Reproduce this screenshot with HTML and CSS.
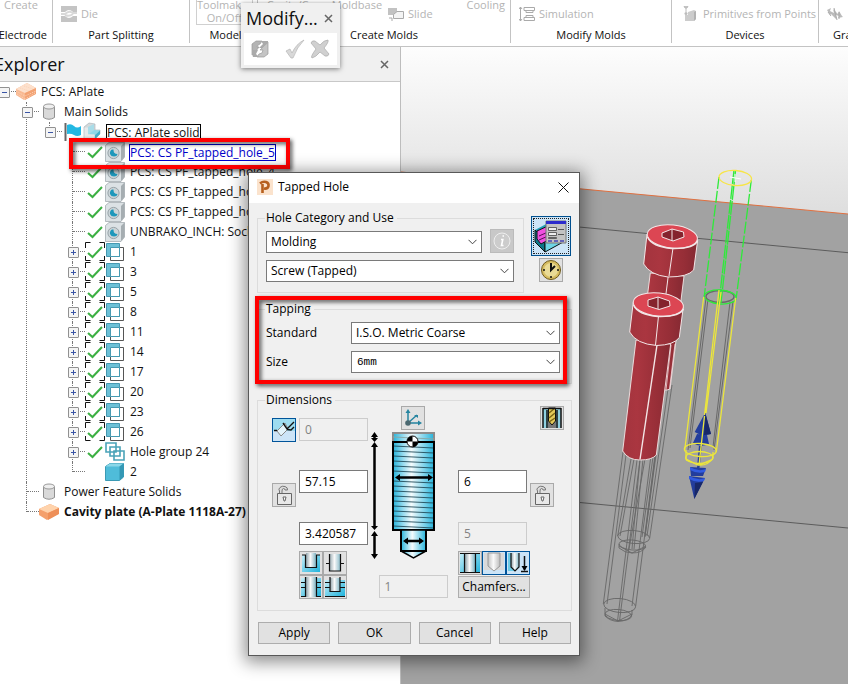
FILE: index.html
```html
<!DOCTYPE html>
<html lang="en">
<head>
<meta charset="utf-8">
<title>Tapped Hole</title>
<link rel="stylesheet" href="styles.css">
</head>
<body>
<svg class="defs" aria-hidden="true">
  <defs>
    <linearGradient id="steel"><stop offset="0" stop-color="#25b4dc"/><stop offset=".45" stop-color="#f4fbfd"/><stop offset="1" stop-color="#25b4dc"/></linearGradient>
    <linearGradient id="aqua" x1="0" y1="0" x2="1" y2="1"><stop offset="0" stop-color="#c8eef8"/><stop offset="1" stop-color="#1fb3dc"/></linearGradient>
    <linearGradient id="mute"><stop offset="0" stop-color="#c4c4c4"/><stop offset=".45" stop-color="#fafafa"/><stop offset="1" stop-color="#bcbcbc"/></linearGradient>
    <linearGradient id="tube"><stop offset="0" stop-color="#8fa3ab"/><stop offset=".45" stop-color="#fafafa"/><stop offset="1" stop-color="#7fb4c4"/></linearGradient>
    <linearGradient id="sky" x1="0" y1="0" x2="0" y2="1"><stop offset="0" stop-color="#fdfdfd"/><stop offset="1" stop-color="#dedede"/></linearGradient>
    <linearGradient id="red"><stop offset="0" stop-color="#a3343e"/><stop offset=".3" stop-color="#aa3640"/><stop offset=".75" stop-color="#962e37"/><stop offset="1" stop-color="#842932"/></linearGradient>
    <symbol id="i-slab" viewBox="0 0 20 20"><path d="M0 7 11 2 20 6 19 12 8 18 0 13Z" fill="#f4a06c"/><path d="M0 7 11 2 20 6 9 11Z" fill="#ffd3ac"/><path d="M9 11 20 6V12L9 18Z" fill="#ee8f58"/></symbol>
    <symbol id="i-slab-dither" viewBox="0 0 20 20"><path d="M0 7 11 1 20 6 19 12 8 18 0 13Z" fill="#f9b992"/><path d="M0 7 11 1 20 6 9 11Z" fill="#fde0cc"/><path d="M9 11 20 6V12L9 18Z" fill="#f3a273"/><path d="M0 9 9 14 20 9M1 12 9 17 19 11M4 6 13 9M8 4 17 7" stroke="#fbd3b8" stroke-dasharray="1 1" fill="none"/></symbol>
    <symbol id="i-cyl" viewBox="0 0 20 20"><path d="M4.500 4.500V15.500Q10 19 15.500 15.500V4.500" fill="#d9d9d9" stroke="#909090"/><ellipse cx="10" cy="4.500" rx="5.500" ry="2.500" fill="#eee" stroke="#999"/></symbol>
    <symbol id="i-flag" viewBox="0 0 20 20"><path d="M3.500 1V19" stroke="#666" stroke-width="2"/><path d="M5 3Q9 1 12 4T19 4V13Q15 15 12 13T5 12Z" fill="#23b8e2"/></symbol>
    <symbol id="i-solid" viewBox="0 0 20 20"><path d="M2 5 7 1 13 2V8L18 8V12L12 18 2 17Z" fill="#d3d9db" stroke="#a3adb1" stroke-width=".6"/><path d="M6 5 12 2V8L8 12H6Z" fill="#a9dce8"/><path d="M7 12 12 8 18 8.500 13 13Z" fill="#8fd8e8"/><path d="M13 13 18 8.500V12L12.500 17.500Z" fill="#45b0cb"/><path d="M2.500 5.500H6V12.500H12.500V17.500H2.500Z" fill="#e6eaeb"/></symbol>
    <symbol id="i-check" viewBox="0 0 20 20"><path d="M3 11 7.500 15 17 5" fill="none" stroke="#3cb043" stroke-width="2"/></symbol>
    <symbol id="i-check-box" viewBox="0 0 20 20"><path d="M3 11 7.500 15 17 5" fill="none" stroke="#3cb043" stroke-width="2"/><path d="M5.500 .5H.5V6M14.500 .5H19.500V6M.5 14V18.500H5.500M14.500 18.500H19.500V14" fill="none" stroke="#111"/></symbol>
    <symbol id="i-feature" viewBox="0 0 20 20"><path d="M.5 3.500 4 .5H19.500V15L16 19.500H.5Z" fill="#dce2e5" stroke="#9ba4a9" stroke-width=".7"/><path d="M16 4 19.500.5V15L16 19Z" fill="#a5adb1"/><circle cx="8.500" cy="11" r="5.600" fill="#ccd4d7" stroke="#98a3a8"/><path d="M7 7.500Q4.500 9 5 12 6 14.500 9 14.500 12 14.500 12.500 12 10.500 12 9 10.500 8.500 9 8.500 7.500Z" fill="#1e98bb"/></symbol>
    <symbol id="i-copy" viewBox="0 0 20 20"><path d="M5.500 5.500H18.500V18.500H5.500Z" fill="#fff" stroke="#555"/><path d="M1.500 1.500H14.500V14.500H1.500Z" fill="#6cc0d6" stroke="#4699b2"/><path d="M5.500 5.500H14.500V14.500H5.500Z" fill="#fff" stroke="#4699b2"/></symbol>
    <symbol id="i-group" viewBox="0 0 20 20"><g fill="none" stroke="#4aa3b8" stroke-width="1.600"><path d="M1 1H11V10H1Z"/><path d="M5 5H15V14H5Z"/><path d="M9 9H19V18H9Z"/></g></symbol>
    <symbol id="i-cube" viewBox="0 0 20 20"><path d="M.5 4.500 5 1.500H18.500V15L14.500 18.500H.5Z" fill="#4fbcd9" stroke="#3b9ab4"/><path d="M.5 4.500 5 1.500H18.500L14.500 4.500Z" fill="#8ad7e9"/><path d="M14.500 4.500 18.500 1.500V15L14.500 18.500Z" fill="#3398b5"/></symbol>
    <symbol id="i-lock" viewBox="0 0 22 22"><path d="M4.500 9.500H18.500V20.500H4.500Z" fill="#e8e8e8" stroke="#666"/><path d="M6.500 9V7Q5 5 7 3.500 9 1.500 12 2.500T14.500 6H12Q12 4.500 10.500 4.500T9 7V9" fill="#ddd" stroke="#777"/><path d="M10 13H13L12 17H11Z" fill="#fff" stroke="#666"/></symbol>
  </defs>
</svg>

<div class="app">
  <header class="ribbon">
    <section class="group"><div class="cmds"><span class="cmd up">Create</span></div><h2>Electrode</h2></section>
    <section class="group"><div class="cmds"><span class="cmd"><svg width="16" height="16" viewBox="0 0 16 16"><path d="M0 0H16V6H12Q8 2 4 6H0ZM0 10H4Q8 14 12 10H16V16H0Z" fill="#c4c4c4"/><path d="M0 8H4Q8 4 12 7H16M4 9Q8 11 12 8" stroke="#d8d8d8" stroke-width="2" fill="none"/></svg>Die</span></div><h2>Part Splitting</h2></section>
    <section class="group"><div class="cmds"><button class="toggle" disabled>Toolmaker<br>On/Off</button></div><h2>Model</h2></section>
    <section class="group"><div class="cmds molds"><span class="cmd up">Cavity/Core</span><span class="cmd up">Moldbase</span><span class="cmd"><svg width="16" height="16" viewBox="0 0 16 16"><path d="M0 2H9V9H0Z" fill="#c2c2c2"/><path d="M5.500 8.500 9 5.500H15.500V12.500H5.500Z" fill="#f4f4f4" stroke="#aaa"/><path d="M1 12H4V15" fill="none" stroke="#aaa"/></svg>Slide</span><span class="cmd up">Cooling</span></div><h2>Create Molds</h2></section>
    <section class="group"><div class="cmds"><span class="cmd"><svg width="16" height="16" viewBox="0 0 16 16"><path d="M1.500 1V15M0 3 1.500 1 3 3M0 13 1.500 15 3 13M5 1.500H15.500V4.500H5ZM5 14.500H15.500V11.500H5ZM7 4.500V6.500H14V4.500M7 11.500V9.500H14V11.500" stroke="#aaa" fill="none"/></svg>Simulation</span></div><h2>Modify Molds</h2></section>
    <section class="group"><div class="cmds"><span class="cmd wide"><svg width="16" height="16" viewBox="0 0 16 16"><path d="M1 0H5L4 2H2ZM3 1V6" fill="#ccc" stroke="#bbb"/><circle cx="3" cy="7.500" r="1.500" fill="#bbb"/><path d="M2 9V15H11L13 13V5L11 4 5 6V9Z" fill="#ccc"/><path d="M11 6 13 5V13L11 15Z" fill="#b2b2b2"/></svg>Primitives from Points</span></div><h2>Devices</h2></section>
    <section class="group last"><div class="cmds"><span class="cmd"><svg width="16" height="16" viewBox="0 0 16 16"><path d="M0 4 4 2 3 5 7 7 6 3 11 8 12 5 15 10 16 11 11 12 12 10 9 9 9 13 4 8 3 9Z" fill="#bbb"/><path d="M1 6 4 10M7 2 10 14M12 6V13" stroke="#aaa"/></svg></span></div><h2>Graphics</h2></section>
  </header>

  <main class="work">
    <aside class="explorer">
      <div class="panel-head"><h1>Explorer</h1><button class="close" aria-label="Close Explorer"><svg width="9" height="9" viewBox="0 0 9 9"><path d="M1 1 8 8M8 1 1 8"/></svg></button></div>
      <ul class="tree">
        <li><div class="node"><i class="exp minus"></i><svg class="ic"><use href="#i-slab-dither"/></svg><span>PCS: APlate</span></div>
          <ul>
            <li><div class="node"><i class="exp minus"></i><svg class="ic"><use href="#i-cyl"/></svg><span>Main Solids</span></div>
              <ul>
                <li><div class="node"><i class="exp minus"></i><svg class="ic"><use href="#i-flag"/></svg><svg class="ic"><use href="#i-solid"/></svg><span class="boxed">PCS: APlate solid</span></div>
                  <ul>
                    <li><div class="node"><i class="exp"></i><svg class="ic"><use href="#i-check"/></svg><svg class="ic"><use href="#i-feature"/></svg><span class="boxed picked">PCS: CS PF_tapped_hole_5</span><b class="mark mark-row"></b></div></li>
                    <li><div class="node"><i class="exp"></i><svg class="ic"><use href="#i-check"/></svg><svg class="ic"><use href="#i-feature"/></svg><span>PCS: CS PF_tapped_hole_4</span></div></li>
                    <li><div class="node"><i class="exp"></i><svg class="ic"><use href="#i-check"/></svg><svg class="ic"><use href="#i-feature"/></svg><span>PCS: CS PF_tapped_hole_3</span></div></li>
                    <li><div class="node"><i class="exp"></i><svg class="ic"><use href="#i-check"/></svg><svg class="ic"><use href="#i-feature"/></svg><span>PCS: CS PF_tapped_hole_2</span></div></li>
                    <li><div class="node"><i class="exp"></i><svg class="ic"><use href="#i-check"/></svg><svg class="ic"><use href="#i-feature"/></svg><span>UNBRAKO_INCH: Socket</span></div></li>
                    <li><div class="node"><i class="exp plus"></i><svg class="ic"><use href="#i-check-box"/></svg><svg class="ic"><use href="#i-copy"/></svg><span>1</span></div></li>
                    <li><div class="node"><i class="exp plus"></i><svg class="ic"><use href="#i-check-box"/></svg><svg class="ic"><use href="#i-copy"/></svg><span>3</span></div></li>
                    <li><div class="node"><i class="exp plus"></i><svg class="ic"><use href="#i-check-box"/></svg><svg class="ic"><use href="#i-copy"/></svg><span>5</span></div></li>
                    <li><div class="node"><i class="exp plus"></i><svg class="ic"><use href="#i-check-box"/></svg><svg class="ic"><use href="#i-copy"/></svg><span>8</span></div></li>
                    <li><div class="node"><i class="exp plus"></i><svg class="ic"><use href="#i-check-box"/></svg><svg class="ic"><use href="#i-copy"/></svg><span>11</span></div></li>
                    <li><div class="node"><i class="exp plus"></i><svg class="ic"><use href="#i-check-box"/></svg><svg class="ic"><use href="#i-copy"/></svg><span>14</span></div></li>
                    <li><div class="node"><i class="exp plus"></i><svg class="ic"><use href="#i-check-box"/></svg><svg class="ic"><use href="#i-copy"/></svg><span>17</span></div></li>
                    <li><div class="node"><i class="exp plus"></i><svg class="ic"><use href="#i-check-box"/></svg><svg class="ic"><use href="#i-copy"/></svg><span>20</span></div></li>
                    <li><div class="node"><i class="exp plus"></i><svg class="ic"><use href="#i-check-box"/></svg><svg class="ic"><use href="#i-copy"/></svg><span>23</span></div></li>
                    <li><div class="node"><i class="exp plus"></i><svg class="ic"><use href="#i-check-box"/></svg><svg class="ic"><use href="#i-copy"/></svg><span>26</span></div></li>
                    <li><div class="node"><i class="exp plus"></i><svg class="ic"><use href="#i-check"/></svg><svg class="ic"><use href="#i-group"/></svg><span>Hole group 24</span></div></li>
                    <li><div class="node"><i class="exp"></i><svg class="ic"></svg><svg class="ic"><use href="#i-cube"/></svg><span>2</span></div></li>
                  </ul>
                </li>
              </ul>
            </li>
            <li><div class="node"><i class="exp"></i><svg class="ic"><use href="#i-cyl"/></svg><span>Power Feature Solids</span></div></li>
            <li><div class="node"><i class="exp"></i><svg class="ic"><use href="#i-slab"/></svg><strong>Cavity plate (A-Plate 1118A-27)</strong></div></li>
          </ul>
        </li>
      </ul>
    </aside>

    <section class="view" aria-label="3D view">
      <svg viewBox="401 47 447 637" preserveAspectRatio="xMinYMin slice">
        <path d="M401 47H848V214H401Z" fill="url(#sky)"/>
        <path d="M401 172 848 214V684H401Z" fill="#a2a2a2"/>
        <path d="M401 172 848 214" stroke="#e07040"/>
        <path d="M401 210 848 252.700M401 485.500 848 528" stroke="#5c5c5c" fill="none"/>
        <g fill="none" stroke="#686868" stroke-width=".9">
          <path d="M672 385 649.700 538M668 389 647 536M664 389 645 536M631 459 617.700 536M634 459 620 536M640 459 632 549M643 459 634 549M645 459 629 549M653 457 642 537M656 455 645 537"/>
          <path d="M623 452 603.300 604M626 455 607 604M655 455 635.700 606M651 455 632 606M637 460 617.500 621M640 460 619.500 621"/>
          <ellipse cx="633.700" cy="537" rx="16" ry="6.500" transform="rotate(5 633.700 537)"/><ellipse cx="632.300" cy="545" rx="13.300" ry="5" transform="rotate(5 632.300 545)"/><path d="M619 544V548Q625 553 632 553 642 553 646 547M619 546 632 553 646 546"/>
          <ellipse cx="619.700" cy="605.500" rx="16" ry="7" transform="rotate(5 619.700 605.500)"/><ellipse cx="618.300" cy="615" rx="13.300" ry="5.500" transform="rotate(5 618.300 615)"/><path d="M605 608V616Q610 621 618 621.500 628 621 632 615V610M605 614 618 621 632 614"/>
        </g>
        <g stroke="#f3e6e7" stroke-linejoin="round">
          <path d="M650.300 273 636 386Q650 392 667 390L670 389 684 276Z" fill="url(#red)" stroke-width=".9"/>
          <path d="M669 270 654 388" fill="none"/>
          <path d="M647 234 643.700 264Q650 275 668 277 688 277 693.700 270L697.700 240Z" fill="url(#red)"/>
          <ellipse cx="672.300" cy="236.500" rx="25.200" ry="11.500" fill="#dc4653" transform="rotate(6 672.300 236.500)"/>
          <path d="M647.500 237Q652 247 672 248.500 694 249 697.500 241" fill="none" stroke-width="1.500"/>
          <path d="M662 233 672 229 683.500 232 684 237 673 241 662 237Z" fill="#85232d"/><path d="M672 229V241M673 248 669 276" fill="none"/>
          <path d="M636 340 622.700 451Q628 460 640 460 652 460 656.300 455L670.700 344Z" fill="url(#red)" stroke-width=".9"/>
          <path d="M657 345 640 459.500" fill="none" stroke-width="1.400"/>
          <path d="M633.300 302 629.700 332Q636 344 656.700 345.500 674 345 679.300 337.500L683.300 307Z" fill="url(#red)"/>
          <ellipse cx="658.300" cy="304.500" rx="25.200" ry="11.500" fill="#dc4653" transform="rotate(6 658.300 304.500)"/>
          <path d="M633.500 305Q638 315 658 316.500 680 317 683.500 309" fill="none" stroke-width="1.500"/>
          <path d="M648 300 658 297 669.500 301 670 306 659 309.500 648 306Z" fill="#85232d"/><path d="M658 297V309M658.500 316 655.500 345" fill="none"/>
        </g>
        <path d="M675 344 669.500 389M671 345 666 390" stroke="#efd8da" stroke-width=".8"/>
        <g fill="none" stroke="#696969"><path d="M706 298 688 450M708 299 690 448M733 301 714 450M730 302 713 447"/><ellipse cx="720" cy="296.500" rx="14" ry="6" stroke-width="1.400"/></g>
        <g fill="none" stroke="#2eea3a" stroke-width="1.300"><path d="M719 177 704.300 296M751.300 180 736.300 297.500" stroke-dasharray="12 2"/><path d="M734 170 719 303M735.500 171 721 303" stroke-dasharray="14 1"/><ellipse cx="720.300" cy="297" rx="16" ry="7" transform="rotate(4 720.300 297)"/></g>
        <g fill="#233d9c"><path d="M705.300 412.500 694.700 432Q702 437 711 434ZM697 434 693 443Q700 448 709 444L707 435ZM699 445H702L699.500 468H697ZM690 467 706 468 703 476H691ZM689 476 705 478 694.300 499Z"/><path d="M690 467Q698 472 706 469L705 472Q697 474 690 470ZM689 476Q698 481 705 478L704 481Q696 483 689 479Z" fill="#315be0"/><path d="M705.300 413 704 435 711 434ZM695 483 694.300 499 703 482Z" fill="#182868"/></g>
        <g fill="none" stroke="#ece63b" stroke-width="1.300"><ellipse cx="735.300" cy="178" rx="16.300" ry="7.500" transform="rotate(4 735.300 178)" stroke="#f7e548"/><path d="M703.700 297 684.700 450M735.700 298 716.300 452M719 290 704.500 415M721 292 706 413M704.500 416 699 465"/><ellipse cx="700.300" cy="450" rx="16" ry="6.500" transform="rotate(4 700.300 450)"/><ellipse cx="699.300" cy="457.500" rx="13.500" ry="6"/><path d="M686 450V459L698 465Q708 466 713 458V452M686 460 699 465 713 459"/></g>
        <path d="M730 177 741 179M735 174V182" stroke="#fff"/>
      </svg>
    </section>
  </main>

  <div class="modify" role="toolbar" aria-label="Modify">
    <div class="modify-head"><h2>Modify...</h2><button class="close" aria-label="Close Modify"><svg width="9" height="9" viewBox="0 0 9 9"><path d="M1 1 8 8M8 1 1 8"/></svg></button></div>
    <div class="modify-body">
      <button aria-label="Refresh"><svg width="18" height="18" viewBox="0 0 18 18"><path d="M1 9V4L5 1H11L9 4 7 5 6 7H8L5 11 1 15Z" fill="#b4b4b4" stroke="#999" stroke-width=".7"/><path d="M17 9V14L13 17H6L8 14 11 13 12 10H9L13 6 17 2Z" fill="#c4c4c4" stroke="#999" stroke-width=".7"/><path d="M10 1H17V3L11 8H8L12 4ZM1 10 7 10 5 14 8 17H2L1 14Z" fill="#aaa"/></svg></button>
      <button aria-label="Accept"><svg width="20" height="20" viewBox="0 0 20 20"><path d="M1 12 5 10 7 14Q11 5 19 1 12 8 8 19H6Z" fill="#d8d8d8" stroke="#b4b4b4" stroke-width=".7"/></svg></button>
      <button aria-label="Cancel changes"><svg width="20" height="20" viewBox="0 0 20 20"><path d="M1 4Q2 1 5 2L10 6Q14 1 18 1 19 3 14 9L19 15Q18 18 15 17L10 13Q6 18 2 19 0 18 6 10Z" fill="#d0d0d0" stroke="#aaa" stroke-width=".7"/></svg></button>
    </div>
  </div>

  <form class="dialog" role="dialog" aria-labelledby="dlg-title">
    <div class="title">
      <svg width="16" height="16" viewBox="0 0 16 16"><path d="M0 0H16V16H0Z" fill="#fbe3cd"/><path d="M5.500 14V5M3 4.500Q6 2 9 3 12 4 11.500 7 11 10 7 9.500" fill="none" stroke="#b7601f" stroke-width="2.600"/></svg>
      <h2 id="dlg-title">Tapped Hole</h2>
      <button type="button" class="close" aria-label="Close"><svg width="11" height="11" viewBox="0 0 11 11"><path d="M.5.5 10.500 10.500M10.500.5.5 10.500"/></svg></button>
    </div>
    <div class="body">
      <div class="top">
        <fieldset class="use">
          <legend>Hole Category and Use</legend>
          <div class="line">
            <label class="combo"><select aria-label="Hole category"><option>Molding</option></select><svg viewBox="0 0 9 6"><path d="M.5.8 4.500 4.800 8.500.8"/></svg></label>
            <button type="button" class="tool flat" aria-label="Information" disabled><svg width="20" height="20" viewBox="0 0 20 20"><circle cx="10" cy="10" r="8" fill="#ccc" stroke="#eee"/><path d="M10.500 5H12M9 8.500H10.800L9.500 14.500H11.500" stroke="#fff" stroke-width="1.600" fill="none"/></svg></button>
          </div>
          <label class="combo"><select aria-label="Hole use"><option>Screw (Tapped)</option></select><svg viewBox="0 0 9 6"><path d="M.5.8 4.500 4.800 8.500.8"/></svg></label>
        </fieldset>
        <div class="side">
          <button type="button" class="big" aria-label="Custom data"><svg width="34" height="34" viewBox="0 0 34 34"><path d="M1 11 16 3 31 13V22L11 33 1 23Z" fill="#1f9fb8"/><path d="M1 11 11 20V33L1 23Z" fill="#0d7688" stroke="#111"/><path d="M11 20 31 10V22L11 33Z" fill="#6ed6e6" stroke="#111"/><path d="M3 12 16 6V20L7 25 3 20Z" fill="#ef50df" stroke="#111"/><path d="M5 17 14 13M5 21 14 17" stroke="#551155"/><path d="M12 2H32V24H12Z" fill="#c3c3c3" stroke="#777"/><path d="M12 2H32V5H12Z" fill="#2c2ccc"/><path d="M14.500 8.500H22.500V11.500H14.500ZM14.500 13.500H22.500V16.500H14.500ZM14.500 18.500H22.500V19.500H14.500Z" fill="#eee" stroke="#444" stroke-width=".8"/><path d="M24 10.500H30M24 15.500H30" stroke="#555"/><path d="M14 22H18M20 22H24M26 22H30" stroke="#4545b8" stroke-width="1.500"/></svg></button>
          <button type="button" class="tool" aria-label="History"><svg width="22" height="22" viewBox="0 0 22 22"><circle cx="11" cy="11" r="9.500" fill="#d7bd62" stroke="#6f5b1c"/><circle cx="11" cy="11" r="7" fill="#eadb96"/><path d="M11 4V11L15 7" stroke="#111" stroke-width="2" fill="none"/><path d="M11 17V19M3 11H5M17 11H19" stroke="#111" stroke-width="1.500"/></svg></button>
        </div>
      </div>

      <fieldset class="tapping">
        <legend>Tapping</legend>
        <label for="std">Standard</label>
        <div class="combo"><select id="std"><option>I.S.O. Metric Coarse</option></select><svg viewBox="0 0 9 6"><path d="M.5.8 4.500 4.800 8.500.8"/></svg></div>
        <label for="size">Size</label>
        <div class="combo mono"><select id="size"><option>6mm</option></select><svg viewBox="0 0 9 6"><path d="M.5.8 4.500 4.800 8.500.8"/></svg></div>
        <b class="mark mark-set"></b>
      </fieldset>

      <fieldset class="dims">
        <legend>Dimensions</legend>
        <div class="cols">
          <div class="left">
            <button type="button" class="tool on" aria-label="Offset"><svg width="22" height="22" viewBox="0 0 22 22"><path d="M0 0H22V12H0Z" fill="#9edcf0"/><path d="M4 12 12 4 15 10 8 17Z" fill="#e4f4fb" stroke="#888"/><path d="M10 4 14 10 21 3M14 10.500 18 11 21 8M1 11.500H4" stroke="#111" stroke-width="1.400" fill="none"/></svg></button>
            <input aria-label="Offset value" value="0" disabled>
            <button type="button" class="tool low" aria-label="Lock depth"><svg width="22" height="22"><use href="#i-lock"/></svg></button>
            <input aria-label="Depth" value="57.15">
            <input class="second" aria-label="Drill tip depth" value="3.420587">
            <div class="quad">
              <button type="button" class="tool" aria-label="Bottom blind"><svg width="22" height="22" viewBox="0 0 22 22"><path d="M2 3H20V20H2Z" fill="url(#aqua)"/><path d="M6 1H16V15H6Z" fill="url(#tube)"/><path d="M2 3H5.500V15.500H16.500V3H20" fill="none" stroke="#111" stroke-width="1.200"/></svg></button>
              <button type="button" class="tool" aria-label="Through next"><svg width="22" height="22" viewBox="0 0 22 22"><path d="M5 2H17V19H5Z" fill="url(#tube)"/><path d="M5.500 2V19H16.500V2M2 11.500H5M17 11.500H20" fill="none" stroke="#111" stroke-width="1.200"/></svg></button>
              <button type="button" class="tool" aria-label="Through all"><svg width="22" height="22" viewBox="0 0 22 22"><path d="M1 2H21V20H1Z" fill="url(#aqua)"/><path d="M6 1H16V21H6Z" fill="url(#tube)"/><path d="M5.500 1V21M16.500 1V21M1 6.500H5M17 6.500H21M1 11.500H5M17 11.500H21M1 20.500H5M17 20.500H21" stroke="#111" stroke-width="1.200"/></svg></button>
              <button type="button" class="tool" aria-label="Through part"><svg width="22" height="22" viewBox="0 0 22 22"><path d="M1 4H21V20H1Z" fill="url(#aqua)"/><path d="M6 2H16V15H6Z" fill="url(#tube)"/><path d="M6 1V15.500H16V1M1 6.500H6M16 6.500H21M1 11.500H6M16 11.500H21M1 20.500H21" fill="none" stroke="#111" stroke-width="1.200"/></svg></button>
            </div>
          </div>
          <div class="mid">
            <button type="button" class="tool" aria-label="Workplane"><svg width="22" height="22" viewBox="0 0 22 22"><path d="M6 16V4M6 16H18M6 16 15 8" stroke="#2584a0" stroke-width="1.500"/><path d="M3.500 6 6 2 8.500 6ZM16 13.500 20 16 16 18.500ZM12 8H16V11Z" fill="#2584a0"/><circle cx="6" cy="16" r="2.800" fill="#4b6870"/></svg></button>
            <svg class="bolt" viewBox="368 431 90 129" role="img" aria-label="Hole profile">
              <path d="M393 433H434V442H393Z" fill="url(#steel)" stroke="#8c8c8c" stroke-width="2"/><path d="M393 437 434 439" stroke="#8aa"/>
              <path d="M393 442H434V530H393Z" fill="url(#steel)"/>
              <path d="M393 446 434 448M393 451 434 453M393 456 434 458M393 461 434 463M393 466 434 468M393 471 434 473M393 481 434 483M393 486 434 488M393 491 434 493M393 496 434 498M393 501 434 503M393 506 434 508M393 511 434 513M393 516 434 518M393 521 434 523M393 526 434 528" stroke="#234c5a" stroke-width=".9"/>
              <path d="M393 442H434V530H393Z" fill="none" stroke="#000" stroke-width="2"/>
              <path d="M401 530H426V551L413.500 558 401 551Z" fill="url(#steel)" stroke="#000" stroke-width="1.500"/><path d="M401 530V551H426V530" fill="none" stroke="#000" stroke-width="2"/>
              <path d="M397 477.500H431M405 541H422M374.500 436V440M374.500 446V526M374.500 535V555" stroke="#000" stroke-width="2.500"/>
              <path d="M395 477.500 400 474V481ZM433 477.500 428 474V481ZM403 541 408 537.500V544.500ZM424 541 419 537.500V544.500Z"/>
              <path d="M371 437 374.500 432 378 437ZM371 438 374.500 442 378 438ZM371 447 374.500 442 378 447ZM371 526 374.500 530 378 526ZM371 536 374.500 531 378 536ZM371 554 374.500 559 378 554Z"/>
              <circle cx="412.500" cy="441.500" r="5.500" fill="#fff" stroke="#000"/><path d="M412.500 441.500V436A5.500 5.500 0 0 0 407 441.500ZM412.500 441.500V447A5.500 5.500 0 0 0 418 441.500Z"/>
            </svg>
            <input aria-label="Count" value="1" disabled>
          </div>
          <div class="right">
            <button type="button" class="tool drill" aria-label="Drill"><svg width="22" height="22" viewBox="0 0 22 22"><path d="M2 1H20V21H2Z" fill="#8fd0e0"/><path d="M7 1H15V21H7Z" fill="#777"/><path d="M7.500 1H14.500V14L11 18 7.500 14Z" fill="#e3c95a" stroke="#111"/><path d="M8 6 14 1M8 11 14 6M8 15 14 11" stroke="#7a6516" stroke-width="1.500"/><path d="M2 1V21M6 3V21M16 3V21M20 1V21M2 1.500H20" stroke="#111" stroke-width="1.500"/></svg></button>
            <div class="line"><input aria-label="Diameter" value="6"><button type="button" class="tool low" aria-label="Lock diameter"><svg width="22" height="22"><use href="#i-lock"/></svg></button></div>
            <input aria-label="Drill diameter" value="5" disabled>
            <div class="shapes">
              <button type="button" class="tool" aria-label="Straight hole"><svg width="22" height="22" viewBox="0 0 22 22"><path d="M1 1H21V21H1Z" fill="url(#aqua)"/><path d="M6 1H16V21H6Z" fill="url(#tube)"/><path d="M1 1.500H21M5.500 1V21M16.500 1V21M1 20.500H21" stroke="#111" stroke-width="1.200"/></svg></button>
              <button type="button" class="tool on" aria-label="Tip"><svg width="22" height="22" viewBox="0 0 22 22"><path d="M1 1H21V18H1Z" fill="#d9d9d9"/><path d="M5 1H17V14L11 19 5 14Z" fill="url(#mute)" stroke="#999"/></svg></button>
              <button type="button" class="tool on" aria-label="Tip depth"><svg width="22" height="22" viewBox="0 0 22 22"><path d="M1 1H4V15L8 19H1Z" fill="#6ccbe5"/><path d="M4 1H12V15L8 19 4 15Z" fill="url(#tube)"/><path d="M4 1V15L8 19 12 15V1" fill="none" stroke="#111" stroke-width="1.200"/><path d="M17.500 4V18M14 19.500H21" stroke="#111" stroke-width="1.500"/><path d="M14.500 14H20.500L17.500 19Z"/></svg></button>
            </div>
            <button type="button" class="push chamfers">Chamfers...</button>
          </div>
        </div>
      </fieldset>
      <div class="actions">
        <button type="button" class="push">Apply</button>
        <button type="button" class="push">OK</button>
        <button type="button" class="push">Cancel</button>
        <button type="button" class="push">Help</button>
      </div>
    </div>
  </form>
</div>
</body>
</html>
```
FILE: styles.css
```css
* { box-sizing: border-box; }
body { margin: 0; font: 12px/16px "Open Sans", "Noto Sans", sans-serif; color: #111; }
h1, h2 { margin: 0; font-weight: 400; font-size: inherit; }
button, input, select { font: inherit; color: inherit; }
button { padding: 0; }
ul { list-style: none; margin: 0; padding: 0; }
svg { display: block; flex: none; }
.defs { position: absolute; width: 0; height: 0; }
.app { position: relative; display: flex; flex-direction: column; min-height: 100vh; overflow: hidden; background: #fff; }

/* Ribbon */
.ribbon { display: grid; grid-template-columns: 53px 137px 68px 253px 161px 147px 1fr; height: 47px; border-bottom: 1px solid #c3c3c3; overflow: hidden; font-size: 11px; }
.group { display: flex; flex-direction: column; height: 43px; border-right: 1px solid #c3c3c3; white-space: nowrap; }
.group.last { border: 0; }
.group h2 { display: flex; justify-content: center; }
.group:first-child h2 { justify-content: flex-end; padding-right: 5px; }
.group:nth-child(3) h2 { padding-left: 4px; }
.group.last h2 { justify-content: flex-start; padding-left: 14px; }
.cmds { display: flex; flex: none; height: 27px; padding: 0 5px 0 8px; color: #b4b4b4; }
.cmd { display: flex; align-items: center; gap: 4px; height: 28px; }
.cmd.wide { padding-left: 3px; }
.cmd.up { height: 9px; }
.group:first-child .cmds { padding-left: 4px; }
.molds { gap: 6px; justify-content: flex-end; }
.molds .cmd:last-child { margin-left: 28px; }
.toggle { width: 57px; height: 25px; border: 1px solid #d0d0d0; border-top: 0; background: #fff; color: #b4b4b4; line-height: 13px; display: flex; align-items: end; justify-content: center; margin-left: -2px; }

/* Explorer */
.work { flex: 1; display: flex; min-height: 0; }
.explorer { width: 401px; flex: none; border-right: 1px solid #bdbdbd; background: #fff; }
.panel-head { display: flex; align-items: center; justify-content: space-between; height: 35px; padding: 0 11px 0 0; background: #f0f0f0; border-bottom: 1px solid #c8c8c8; }
.panel-head h1 { font-size: 18px; line-height: 32px; text-indent: -6px; }
.close { border: 0; background: none; padding: 0; }
.close path { stroke: #666; stroke-width: 1.500; fill: none; }

.tree ul { padding-left: 23px; }
.tree li { position: relative; }
.tree li li::before { content: ""; position: absolute; left: 3px; top: 0; bottom: 0; border-left: 1px dotted #777; }
.tree li li:last-child::before { bottom: auto; height: 10px; }
.node { position: relative; display: flex; align-items: center; height: 20px; white-space: nowrap; }
.node span, .node strong { margin-left: 5px; }
.ic { width: 20px; height: 20px; }
.exp { position: relative; width: 16px; height: 10px; flex: none; }
.exp::before { content: ""; position: absolute; left: 4px; right: 0; top: 4px; border-top: 1px dotted #777; }
.exp.plus::after, .exp.minus::after { content: ""; position: absolute; left: -1px; top: 0; width: 9px; height: 9px; border: 1px solid #919191; border-radius: 1px; background: linear-gradient(#3a55a5, #3a55a5) center / 5px 1px no-repeat, linear-gradient(#3a55a5, #3a55a5) center / 1px 5px no-repeat, #f4f4f4; }
.exp.minus::after { background: linear-gradient(#3a55a5, #3a55a5) center / 5px 1px no-repeat, #f4f4f4; }
.node .boxed { margin-left: 4px; border: 1px solid #000; line-height: 15px; }
.node .picked { color: #0000c8; border-color: #0000c8; }
.mark { position: absolute; border: 4px solid #f00; filter: drop-shadow(2px 2px 2px rgba(0, 0, 0, .7)); pointer-events: none; z-index: 1; }
.mark-row { left: 0; top: -4px; width: 221px; height: 31px; }
.view { flex: 1; min-width: 0; position: relative; overflow: hidden; background: #a2a2a2; }
.view svg { position: absolute; inset: 0; width: 100%; height: 100%; }

/* Floating toolbar */
.modify { position: absolute; left: 241px; top: 3px; width: 99px; padding: 0 3px 3px; background: #f0f0f0; box-shadow: 0 1px 5px rgba(0, 0, 0, .5); z-index: 1; }
.modify-head { display: flex; justify-content: space-between; align-items: center; height: 30px; padding: 0 4px 0 2px; }
.modify-head h2 { font-size: 18px; line-height: 30px; }
.modify-body { display: flex; align-items: center; justify-content: space-between; height: 32px; padding: 0 7px; background: #fff; }
.modify-body button { border: 0; background: none; }
.modify-body button:nth-child(2) { margin-left: 10px; }

/* Dialog */
.dialog { position: absolute; left: 248px; top: 172px; width: 332px; border: 1px solid #585858; background: #f0f0f0; box-shadow: 0 3px 16px 3px rgba(0, 0, 0, .45); color: #000; z-index: 2; }
.title { display: flex; align-items: center; gap: 5px; height: 30px; padding: 0 10px 2px 8px; background: #fff; }
.title .close { margin-left: auto; }
.title .close path { stroke: #111; stroke-width: 1; }
.body { display: flex; flex-direction: column; gap: 10px; padding: 9px 7px 11px 8px; }
fieldset { margin: 0; padding: 7px 9px 10px 8px; border: 1px solid #dcdcdc; min-width: 0; }
legend { padding: 0 3px 0 1px; line-height: 12px; margin-left: -1px; }
.top { display: flex; justify-content: space-between; gap: 7px; }
.use { flex: 1; display: flex; flex-direction: column; }
.use > .combo { margin-top: 7px; }
.use .line { display: flex; gap: 8px; height: 22px; align-items: flex-end; }
.use .line .combo { flex: 1; }
.combo { display: grid; align-items: center; min-width: 0; }
.combo select, .combo svg { grid-area: 1 / 1; }
.combo select { appearance: none; width: 100%; height: 22px; padding: 0 20px 0 4px; border: 1px solid #7a7a7a; border-radius: 0; background: #fff; }
.combo.mono select { font: 11px/16px "Liberation Mono", monospace; padding-left: 5px; }
.combo svg { justify-self: end; width: 9px; height: 6px; margin-right: 5px; pointer-events: none; }
.combo path { fill: none; stroke: #444; }
.side { display: flex; flex-direction: column; align-items: center; gap: 2px; padding: 4px 1px 0 0; }
.big { width: 40px; height: 40px; display: grid; place-items: center; border: 1px solid #00508f; background: #cce4f7; outline: 1px dotted #222; outline-offset: -3px; }
.tool { width: 24px; height: 24px; flex: none; display: grid; place-items: center; border: 1px solid #a9a9a9; background: #e1e1e1; overflow: hidden; }
.tool.flat { background: #c8c8c8; border-color: #bbb; }
.tool.on { background: #cce4f7; border-color: #00549a; }
.tapping { position: relative; display: grid; grid-template-columns: 85px 1fr; row-gap: 7px; padding-right: 11px; }
.tapping label { line-height: 22px; }
.mark-set { left: -3px; top: -19px; right: 4px; height: 88px; }
.dims { padding: 0 7px 11px 14px; }
.dims legend { margin-left: -7px; }
.cols { display: flex; height: 193px; }
.cols input { width: 69px; height: 23px; padding: 0 5px; border: 1px solid #7a7a7a; background: #fff; }
.cols input:disabled { border-color: #ccc; background: #f0f0f0; color: #838383; }
.left { display: grid; grid-template-columns: 24px 69px; grid-template-rows: 52px 52px 29px 48px; column-gap: 3px; align-items: start; padding-top: 12px; }
.left .low { margin-top: 13px; }
.left .second, .quad { grid-column: 2; }
.quad { display: grid; grid-template-columns: 24px 24px; }
.mid { flex: 1; display: flex; flex-direction: column; align-items: center; }
.bolt { width: 90px; height: 129px; margin: 1px 0 15px; }
.right { display: flex; flex-direction: column; width: 106px; }
.drill { align-self: flex-end; margin-bottom: 40px; }
.right .line { display: flex; gap: 3px; height: 52px; align-items: flex-start; }
.right .low { margin-top: 13px; }
.shapes { display: flex; margin-top: 6px; }
.push { flex: 1; height: 22px; border: 1px solid #adadad; background: #e1e1e1; }
.push.chamfers { flex: none; width: 72px; margin-top: 1px; }
.actions { display: flex; gap: 8px; padding: 1px 1px 0; }
```
